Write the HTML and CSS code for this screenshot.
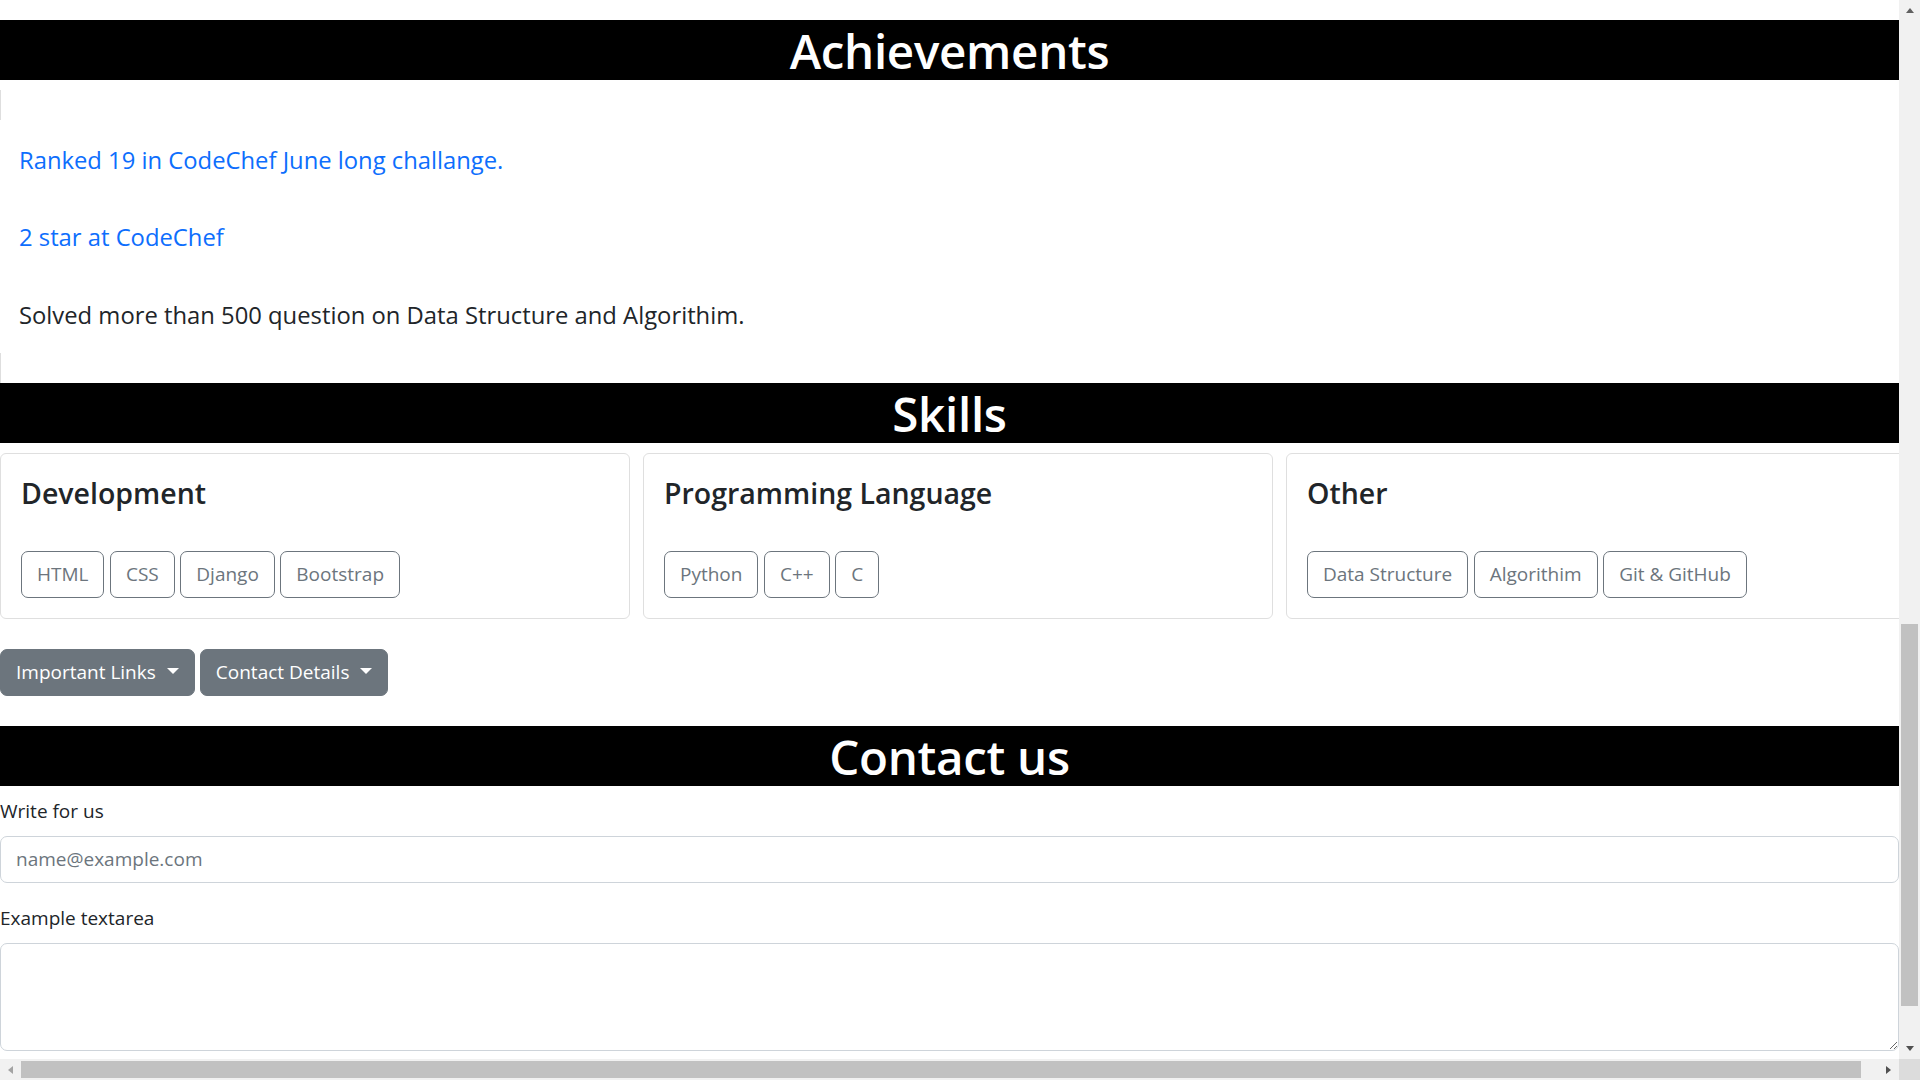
FILE: index.html
```html
<!DOCTYPE html>
<html lang="en">
<head>
<meta charset="utf-8">
<title>Portfolio</title>
<link rel="stylesheet" href="styles.css">
</head>
<body>
<div class="screen">
  <main class="page">
    <div class="prev-end"></div>

    <h1 class="band">Achievements</h1>
    <section class="ach">
      <div class="edge"></div>
      <ul class="ach-list">
        <li><a href="#" class="link">Ranked 19 in CodeChef June long challange.</a></li>
        <li><a href="#" class="link">2 star at CodeChef</a></li>
        <li>Solved more than 500 question on Data Structure and Algorithim.</li>
      </ul>
      <div class="edge"></div>
    </section>

    <h1 class="band">Skills</h1>
    <div class="cards">
      <div class="card">
        <h4 class="card-title">Development</h4>
        <div class="chips">
          <button class="chip">HTML</button>
          <button class="chip">CSS</button>
          <button class="chip">Django</button>
          <button class="chip">Bootstrap</button>
        </div>
      </div>
      <div class="card">
        <h4 class="card-title">Programming Language</h4>
        <div class="chips">
          <button class="chip">Python</button>
          <button class="chip">C++</button>
          <button class="chip">C</button>
        </div>
      </div>
      <div class="card">
        <h4 class="card-title">Other</h4>
        <div class="chips">
          <button class="chip">Data Structure</button>
          <button class="chip">Algorithim</button>
          <button class="chip">Git &amp; GitHub</button>
        </div>
      </div>
    </div>

    <div class="dropdowns">
      <button class="dd">Important Links<span class="caret"></span></button>
      <button class="dd">Contact Details<span class="caret"></span></button>
    </div>

    <h1 class="band">Contact us</h1>
    <form class="contact">
      <div class="field">
        <label class="label" for="email">Write for us</label>
        <input class="control" id="email" type="email" placeholder="name@example.com">
      </div>
      <div class="field">
        <label class="label" for="msg">Example textarea</label>
        <textarea class="control area" id="msg" rows="3"></textarea>
      </div>
    </form>
  </main>

  <div class="vscroll">
    <div class="arrow-box"><span class="tri tri-up"></span></div>
    <div class="v-before"></div>
    <div class="v-thumb"></div>
    <div class="v-after"></div>
    <div class="arrow-box"><span class="tri tri-down"></span></div>
  </div>

  <div class="hscroll">
    <div class="arrow-box"><span class="tri tri-left"></span></div>
    <div class="h-thumb"></div>
    <div class="h-after"></div>
    <div class="arrow-box"><span class="tri tri-right"></span></div>
  </div>

  <div class="corner"></div>
</div>
</body>
</html>
```

FILE: styles.css
```css
* { box-sizing: border-box; }

html, body {
  margin: 0;
  padding: 0;
  height: 100%;
  overflow: hidden;
  background: #fff;
}

body {
  font-family: "Open Sans", "Noto Sans", "Liberation Sans", sans-serif;
  font-size: 19px;
  line-height: 30px;
  color: #212529;
}

.screen {
  display: grid;
  grid-template-columns: 1fr 21px;
  grid-template-rows: 1fr 21px;
  width: 1920px;
  height: 1080px;
}

.page {
  overflow: hidden;
  min-width: 0;
}

.prev-end { height: 20px; }

.band {
  margin: 0 0 10px 0;
  height: 60px;
  padding-top: 2px;
  line-height: 58px;
  background: #000;
  color: #fff;
  text-align: center;
  font-size: 47.5px;
  font-weight: 600;
  letter-spacing: -0.3px;
}

/* Achievements */
.ach { display: flex; flex-direction: column; }
.edge {
  height: 30px;
  border-left: 1px solid #dedede;
}
.ach-list {
  list-style: none;
  margin: 0;
  padding: 21.5px 0 18.5px 19px;
  font-size: 23.8px;
  line-height: 37.5px;
}
.ach-list li { margin-bottom: 40px; }
.ach-list li:last-child { margin-bottom: 0; }
.link { color: #0d6efd; text-decoration: none; }

/* Skills cards */
.cards {
  display: flex;
  gap: 13px;
}
.card {
  flex: 0 0 630px;
  border: 1px solid #dfdfdf;
  border-radius: 6px;
  padding: 20px;
}
.card-title {
  margin: 0 0 40px 0;
  padding-top: 1px;
  font-size: 28.5px;
  line-height: 36px;
  font-weight: 600;
  color: #212529;
}
.chips {
  display: flex;
  gap: 5.5px;
}
.chip {
  font-family: inherit;
  font-size: 19px;
  line-height: 30px;
  padding: 7.5px 15px;
  border: 1.25px solid #6c757d;
  border-radius: 7px;
  background: transparent;
  color: #6c757d;
}

/* Dropdowns */
.dropdowns {
  display: flex;
  gap: 5px;
  padding: 30px 0;
}
.dd {
  font-family: inherit;
  font-size: 19px;
  line-height: 30px;
  padding: 7.5px 15px;
  border: 1.25px solid #6c757d;
  border-radius: 7px;
  background: #6c757d;
  color: #fff;
}
.caret {
  display: inline-block;
  margin-left: 11px;
  vertical-align: 5px;
  border-top: 6px solid #fff;
  border-right: 6px solid transparent;
  border-left: 6px solid transparent;
  border-bottom: 0;
}

/* Contact form */
.contact { display: flex; flex-direction: column; }
.field { margin-bottom: 20px; }
.label {
  display: block;
  margin-bottom: 10px;
  line-height: 30px;
}
.control {
  display: block;
  width: 100%;
  height: 47.5px;
  font-family: inherit;
  font-size: 19px;
  line-height: 30px;
  padding: 7.5px 15px;
  border: 1.25px solid #ced4da;
  border-radius: 7px;
  color: #212529;
  background: #fff;
}
.control::placeholder { color: #6c757d; }
.area { height: 107.5px; resize: vertical; }

/* Fake scrollbars */
.vscroll {
  background: #f1f1f1;
  display: flex;
  flex-direction: column;
}
.arrow-box {
  flex: 0 0 21px;
  width: 21px;
  height: 21px;
  display: flex;
  align-items: center;
  justify-content: center;
}
.v-before { flex: 0 0 603px; }
.v-thumb {
  flex: 0 0 382px;
  margin: 0 2px;
  background: #c1c1c1;
}
.v-after { flex: 1 1 auto; }

.hscroll {
  background: #f1f1f1;
  display: flex;
}
.h-thumb {
  flex: 0 0 1840px;
  margin: 2px 0;
  background: #c1c1c1;
}
.h-after { flex: 1 1 auto; }

.corner { background: #dcdcdc; }

.tri { display: block; width: 0; height: 0; }
.tri-up {
  border-left: 4.5px solid transparent;
  border-right: 4.5px solid transparent;
  border-bottom: 5px solid #606060;
}
.tri-down {
  border-left: 4.5px solid transparent;
  border-right: 4.5px solid transparent;
  border-top: 5px solid #505050;
}
.tri-left {
  border-top: 4.5px solid transparent;
  border-bottom: 4.5px solid transparent;
  border-right: 5px solid #a3a3a3;
}
.tri-right {
  border-top: 4.5px solid transparent;
  border-bottom: 4.5px solid transparent;
  border-left: 5px solid #505050;
}
```
